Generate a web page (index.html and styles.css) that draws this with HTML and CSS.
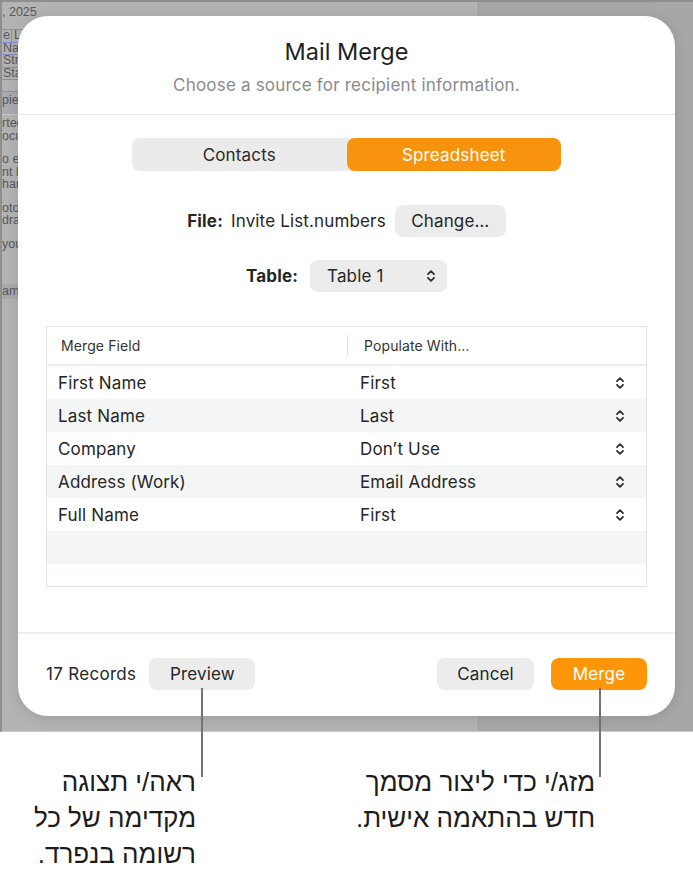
FILE: index.html
```html
<!DOCTYPE html>
<html lang="en">
<head>
<meta charset="utf-8">
<title>Mail Merge</title>
<link rel="stylesheet" href="styles.css">
</head>
<body>
<div class="page">
  <div class="screen">
    <div class="doc">
      <div class="doc-date">, 2025</div>
      <div class="doc-table">
        <div class="doc-row"><span class="cell">e</span><span class="cell">Last</span></div>
        <div class="doc-row"><span class="cell">Name</span></div>
        <div class="doc-row"><span class="cell">Street</span></div>
        <div class="doc-row"><span class="cell">State</span></div>
      </div>
      <div class="doc-rec">pient</div>
      <div class="doc-para">
        <div>rted</div>
        <div>ocument</div>
      </div>
      <div class="doc-para">
        <div>o edit</div>
        <div>nt lo</div>
        <div>hange</div>
      </div>
      <div class="doc-para">
        <div>otos</div>
        <div>drag</div>
      </div>
      <div class="doc-para">
        <div>your</div>
      </div>
      <div class="doc-band">ame</div>
    </div>
    <div class="doc-side"></div>

    <div class="dialog">
      <header class="dlg-head">
        <h1 class="dlg-title">Mail Merge</h1>
        <p class="dlg-sub">Choose a source for recipient information.</p>
      </header>
      <section class="dlg-body">
        <div class="segmented">
          <div class="seg">Contacts</div>
          <div class="seg seg-on">Spreadsheet</div>
        </div>
        <div class="file-row">
          <span class="lbl">File:</span>
          <span class="file-name">Invite List.numbers</span>
          <span class="btn btn-change">Change…</span>
        </div>
        <div class="table-row">
          <span class="lbl">Table:</span>
          <span class="popup">Table 1
            <svg class="updown" viewBox="0 0 10 16" width="10" height="16"><path d="M2 6.2 L5 3.2 L8 6.2 M2 9.8 L5 12.8 L8 9.8"/></svg>
          </span>
        </div>
        <div class="fields">
          <div class="f-head">
            <div class="fh-c1">Merge Field</div>
            <div class="fh-c2">Populate With…</div>
          </div>
          <div class="f-row"><div class="c1">First Name</div><div class="c2">First<svg class="updown" viewBox="0 0 10 16" width="10" height="16"><path d="M2 6.2 L5 3.2 L8 6.2 M2 9.8 L5 12.8 L8 9.8"/></svg></div></div>
          <div class="f-row alt"><div class="c1">Last Name</div><div class="c2">Last<svg class="updown" viewBox="0 0 10 16" width="10" height="16"><path d="M2 6.2 L5 3.2 L8 6.2 M2 9.8 L5 12.8 L8 9.8"/></svg></div></div>
          <div class="f-row"><div class="c1">Company</div><div class="c2">Don’t Use<svg class="updown" viewBox="0 0 10 16" width="10" height="16"><path d="M2 6.2 L5 3.2 L8 6.2 M2 9.8 L5 12.8 L8 9.8"/></svg></div></div>
          <div class="f-row alt"><div class="c1">Address (Work)</div><div class="c2">Email Address<svg class="updown" viewBox="0 0 10 16" width="10" height="16"><path d="M2 6.2 L5 3.2 L8 6.2 M2 9.8 L5 12.8 L8 9.8"/></svg></div></div>
          <div class="f-row"><div class="c1">Full Name</div><div class="c2">First<svg class="updown" viewBox="0 0 10 16" width="10" height="16"><path d="M2 6.2 L5 3.2 L8 6.2 M2 9.8 L5 12.8 L8 9.8"/></svg></div></div>
          <div class="f-row alt empty"></div>
        </div>
      </section>
      <footer class="dlg-foot">
        <span class="records">17 Records</span>
        <span class="btn btn-preview">Preview</span>
        <span class="spacer"></span>
        <span class="btn btn-cancel">Cancel</span>
        <span class="btn btn-merge">Merge</span>
      </footer>
    </div>
  </div>

  <div class="callouts">
    <div class="callout callout-left" dir="rtl">
      <div>ראה/י תצוגה</div>
      <div>מקדימה של כל</div>
      <div>רשומה בנפרד.</div>
    </div>
    <div class="callout callout-right" dir="rtl">
      <div>מזג/י כדי ליצור מסמך</div>
      <div>חדש בהתאמה אישית.</div>
    </div>
  </div>

  <div class="leader leader-preview"></div>
  <div class="leader leader-merge"></div>
</div>
</body>
</html>
```

FILE: styles.css
```css
* { box-sizing: border-box; }

html, body {
  margin: 0;
  padding: 0;
  background: #ffffff;
}

body {
  font-family: "Inter", "Liberation Sans", sans-serif;
  color: #262626;
}

.page {
  position: relative;
  width: 693px;
  height: 875px;
  overflow: hidden;
}

/* ---------- dimmed background screen ---------- */
.screen {
  position: relative;
  height: 732px;
  display: flex;
  background: #a7a7a7;
  border-top: 2px solid #8e8e8e;
  border-left: 2px solid #8f8f8f;
  border-bottom: 1px solid #c9c9c9;
  overflow: hidden;
}

.doc {
  width: 475px;
  background: #b3b3b3;
  border-right: 1px solid #b9b9b9;
  font-family: "Liberation Sans", sans-serif;
  font-size: 12.5px;
  color: #585858;
  line-height: 12.5px;
  overflow: hidden;
  white-space: nowrap;
}

.doc-side { flex: 1; }

.doc-date {
  padding-top: 3px;
  line-height: 14px;
}

.doc-table {
  margin-top: 10px;
  border-top: 1px solid #8a8ad2;
}
.doc-row {
  display: flex;
  height: 12.5px;
  border-bottom: 1px solid #8a8ad2;
}
.doc-row .cell {
  padding: 0 1px;
  border-right: 1px solid #8a8ad2;
  line-height: 11.5px;
}
.doc-row .cell + .cell { padding-left: 2px; }

.doc-rec {
  margin-top: 11px;
  border-top: 1px solid #8a8ad2;
  background: #aaaaaf;
  padding-top: 2px;
  height: 24px;
  border-bottom: 1px solid #c7c7c7;
}

.doc-para {
  margin-top: 2px;
}
.doc-para + .doc-para { margin-top: 11px; }

.doc-band {
  margin-top: 34px;
  background: #a9a9a9;
  height: 15px;
  line-height: 15px;
}

/* ---------- dialog ---------- */
.dialog {
  position: absolute;
  left: 16px;
  top: 14px;
  width: 657px;
  height: 700px;
  background: #ffffff;
  border-radius: 30px;
  box-shadow: 0 2px 14px rgba(0, 0, 0, 0.12);
  display: flex;
  flex-direction: column;
  overflow: hidden;
}

.dlg-head {
  padding: 22px 0 18px;
  text-align: center;
  border-bottom: 1px solid #e4e4e4;
}

.dlg-title {
  margin: 0;
  font-size: 23.5px;
  line-height: 28px;
  font-weight: 400;
  color: #1f1f1f;
  letter-spacing: 0;
}

.dlg-sub {
  margin: 8px 0 0;
  font-size: 17px;
  line-height: 22px;
  color: #8a8a8a;
  letter-spacing: 0.2px;
}

.dlg-body {
  flex: 1;
  display: flex;
  flex-direction: column;
  align-items: center;
  padding-top: 23px;
}

.segmented {
  display: flex;
  width: 429px;
  height: 33px;
  background: #ebebeb;
  border-radius: 8px;
}
.seg {
  flex: 1;
  display: flex;
  align-items: center;
  justify-content: center;
  font-size: 17px;
  color: #2a2a2a;
  border-radius: 8px;
  letter-spacing: 0.15px;
}
.seg-on {
  background: #f7930c;
  color: #ffffff;
}

.file-row,
.table-row {
  display: flex;
  align-items: center;
  font-size: 17px;
  letter-spacing: 0.15px;
}
.file-row { margin-top: 34px; }
.table-row { margin-top: 23px; }

.lbl {
  font-weight: 700;
  color: #262626;
}

.file-name {
  margin-left: 8px;
  color: #262626;
}

.btn {
  display: inline-flex;
  align-items: center;
  justify-content: center;
  height: 32px;
  border-radius: 8px;
  background: #ececec;
  font-size: 17px;
  color: #262626;
  letter-spacing: 0.15px;
}

.btn-change {
  margin-left: 9px;
  width: 111px;
}

.popup {
  display: inline-flex;
  align-items: center;
  justify-content: space-between;
  margin-left: 12px;
  width: 137px;
  height: 32px;
  padding: 0 11px 0 17px;
  border-radius: 8px;
  background: #ececec;
}

.updown {
  display: block;
  fill: none;
  stroke: #2f2f2f;
  stroke-width: 1.8;
  stroke-linecap: round;
  stroke-linejoin: round;
}

/* ---------- field table ---------- */
.fields {
  margin-top: 34px;
  width: 601px;
  height: 261px;
  border: 1px solid #e3e3e3;
}

.f-head {
  display: grid;
  grid-template-columns: 300px 1fr;
  align-items: center;
  height: 39px;
  border-bottom: 2px solid #eeeeee;
  font-size: 14px;
  color: #333333;
  letter-spacing: 0.1px;
}
.fh-c1 { padding-left: 14px; }
.fh-c2 {
  padding-left: 16px;
  border-left: 1px solid #e2e2e2;
  line-height: 21px;
}

.f-row {
  display: grid;
  grid-template-columns: 300px 1fr;
  align-items: center;
  height: 33px;
  font-size: 17px;
  color: #262626;
  letter-spacing: 0.15px;
}
.f-row.alt { background: #f4f5f5; }

.f-row .c1 { padding-left: 11px; }
.f-row .c2 {
  display: flex;
  align-items: center;
  justify-content: space-between;
  padding-left: 13px;
  padding-right: 21px;
}

/* ---------- footer ---------- */
.dlg-foot {
  display: flex;
  align-items: center;
  height: 84px;
  padding: 0 28px 2px;
  border-top: 2px solid #eeeeee;
}

.records {
  font-size: 17px;
  letter-spacing: 0.3px;
}

.btn-preview {
  margin-left: 13px;
  width: 106px;
}

.spacer { flex: 1; }

.btn-cancel { width: 97px; }

.btn-merge {
  margin-left: 17px;
  width: 96px;
  background: #fd9709;
  color: #ffffff;
}

/* ---------- callouts ---------- */
.callouts {
  display: grid;
  grid-template-columns: 196px 1fr;
  padding-right: 98px;
  padding-top: 32px;
  font-family: "Liberation Sans", "DejaVu Sans", sans-serif;
  font-size: 26px;
  line-height: 36px;
  color: #1c1c1c;
}

.callout { text-align: right; }

.leader {
  position: absolute;
  top: 688px;
  width: 2px;
  height: 89px;
  background: #747474;
}
.leader-preview { left: 201px; }
.leader-merge { left: 599px; }
```
